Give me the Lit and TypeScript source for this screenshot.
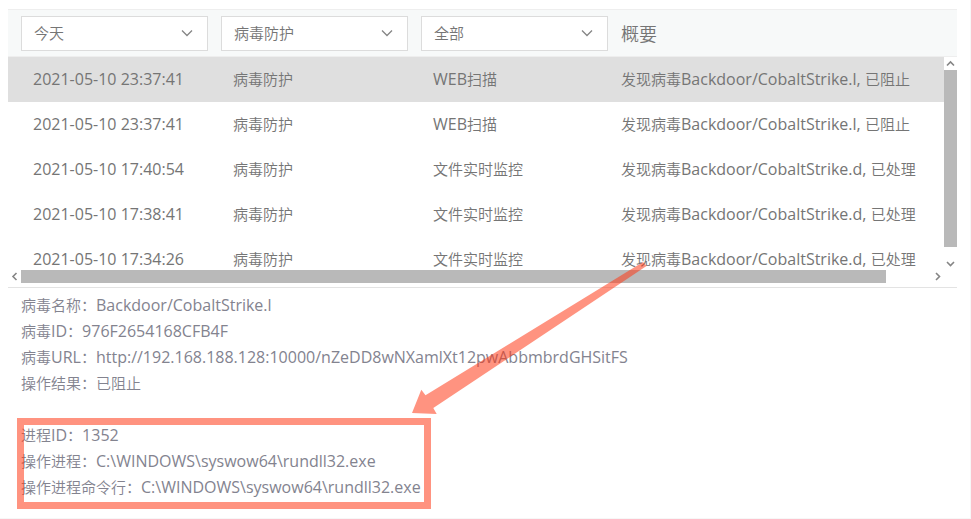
import { LitElement, html, css, svg } from "lit";
import { customElement, state } from "lit/decorators.js";
import { classMap } from "lit/directives/class-map.js";

interface LogEntry {
  time: string;
  category: string;
  feature: string;
  summary: string;
}

const ENTRIES: LogEntry[] = [
  { time: "2021-05-10 23:37:41", category: "病毒防护", feature: "WEB扫描", summary: "发现病毒Backdoor/CobaltStrike.l, 已阻止" },
  { time: "2021-05-10 23:37:41", category: "病毒防护", feature: "WEB扫描", summary: "发现病毒Backdoor/CobaltStrike.l, 已阻止" },
  { time: "2021-05-10 17:40:54", category: "病毒防护", feature: "文件实时监控", summary: "发现病毒Backdoor/CobaltStrike.d, 已处理" },
  { time: "2021-05-10 17:38:41", category: "病毒防护", feature: "文件实时监控", summary: "发现病毒Backdoor/CobaltStrike.d, 已处理" },
  { time: "2021-05-10 17:34:26", category: "病毒防护", feature: "文件实时监控", summary: "发现病毒Backdoor/CobaltStrike.d, 已处理" },
];

const THREAT: [string, string][] = [
  ["病毒名称", "Backdoor/CobaltStrike.l"],
  ["病毒ID", "976F2654168CFB4F"],
  ["病毒URL", "http://192.168.188.128:10000/nZeDD8wNXamlXt12pwAbbmbrdGHSitFS"],
  ["操作结果", "已阻止"],
];

const PROCESS: [string, string][] = [
  ["进程ID", "1352"],
  ["操作进程", "C:\\WINDOWS\\syswow64\\rundll32.exe"],
  ["操作进程命令行", "C:\\WINDOWS\\syswow64\\rundll32.exe"],
];

const FILTERS = [
  { label: "时间", options: ["今天"] },
  { label: "类别", options: ["病毒防护"] },
  { label: "功能", options: ["全部"] },
];

// Latin runs are set one step larger than the Chinese text around them.
const mixed = (text: string) =>
  text
    .split(/([\x20-\x7e]+)/)
    .filter(Boolean)
    .map((run) => (/^[\x20-\x7e]/.test(run) ? html`<span class="latin">${run}</span>` : run));

const CHEVRONS = {
  up: "M3 8.5 6.5 5 10 8.5",
  down: "M3 5 6.5 8.5 10 5",
  left: "M8.5 3 5 6.5 8.5 10",
  right: "M5 3 8.5 6.5 5 10",
};

const arrow = (dir: keyof typeof CHEVRONS) =>
  html`<svg class="arrow" viewBox="0 0 13 13" aria-hidden="true">${svg`<path d=${CHEVRONS[dir]} />`}</svg>`;

@customElement("app-root")
export class AppRoot extends LitElement {
  @state() private selected = 0;

  static styles = css`
    :host {
      display: block;
      box-sizing: border-box;
      min-height: 100vh;
      padding: 9px 13px 8px 8px;
      border-right: 1px solid #f7f7f7;
      border-bottom: 1px solid #f7f7f7;
      background: #fff;
      color: #757575;
      font-family: "Noto Sans CJK SC", sans-serif;
      font-size: 15px;
      font-weight: 350;
      line-height: 26px;
    }
    .latin {
      font-family: "Open Sans", sans-serif;
      font-size: 16px;
      font-weight: 400;
      line-height: 1;
    }
    .filters {
      display: grid;
      grid-template-columns: 187px 187px 187px 1fr;
      gap: 13px;
      align-items: center;
      box-sizing: border-box;
      height: 48px;
      padding-left: 13px;
      border-top: 1px solid #eee;
      border-bottom: 1px solid #eee;
      background: #f7f9f9;
    }
    .filter {
      display: grid;
      align-items: center;
    }
    .filter select, .filter svg {
      grid-area: 1 / 1;
    }
    .filter select {
      appearance: none;
      height: 35px;
      margin: 0;
      padding: 0 32px 0 12px;
      border: 1px solid #dcdcdc;
      border-radius: 0;
      background: #fff;
      color: inherit;
      font: inherit;
    }
    .filter svg {
      justify-self: end;
      width: 12px;
      height: 8px;
      margin-right: 15px;
      pointer-events: none;
    }
    svg path {
      fill: none;
      stroke: #858585;
      stroke-width: 1.3;
    }
    .summary-title {
      margin: 0;
      font-size: 18px;
      font-weight: inherit;
    }
    .list {
      display: grid;
      grid-template-columns: 1fr 13px;
      grid-template-rows: 213px 13px;
      padding-bottom: 4px;
      border-bottom: 1px solid #e3e3e3;
    }
    .viewport {
      overflow: hidden;
    }
    table {
      width: 100%;
      table-layout: fixed;
      border-collapse: collapse;
    }
    .wide {
      width: 200px;
    }
    .feature {
      width: 188px;
    }
    td {
      box-sizing: border-box;
      height: 45px;
      padding: 0 0 2px 25px;
      white-space: nowrap;
    }
    .selected {
      background: #dfdfdf;
    }
    .bar {
      display: flex;
    }
    .bar.vertical {
      flex-direction: column;
    }
    .bar button {
      flex: none;
      display: block;
      width: 13px;
      height: 13px;
      padding: 0;
      border: 0;
      background: none;
    }
    .arrow {
      display: block;
      width: 13px;
      height: 13px;
    }
    .arrow path {
      stroke-width: 1.6;
    }
    .track {
      flex: 1;
    }
    .thumb {
      background: #b9b9b9;
    }
    .vertical .thumb {
      height: 94.6%;
    }
    .horizontal .thumb {
      width: 95%;
      height: 13px;
    }
    .details {
      position: relative;
      display: grid;
      gap: 26px;
      justify-items: start;
      padding: 4px 13px;
      color: #83838f;
    }
    dl {
      margin: 0;
    }
    dl div {
      display: flex;
      height: 26px;
      white-space: nowrap;
    }
    dt, dd {
      margin: 0;
    }
    .process {
      position: relative;
    }
    .process::after {
      content: "";
      position: absolute;
      inset: -4px -10px -9px -4px;
      border: 7px solid rgba(255, 56, 21, 0.54);
    }
    .pointer {
      position: absolute;
      left: 404px;
      top: -27px;
      width: 236px;
      height: 154px;
      pointer-events: none;
    }
    .pointer path {
      fill: rgba(255, 56, 21, 0.54);
      stroke: none;
    }
  `;

  private facts(rows: [string, string][]) {
    return rows.map(([name, value]) => html`<div><dt>${mixed(name)}：</dt><dd>${mixed(value)}</dd></div>`);
  }

  render() {
    return html`
      <div class="filters">
        ${FILTERS.map(
          (f) => html`<label class="filter">
            <select aria-label=${f.label}>${f.options.map((o) => html`<option>${o}</option>`)}</select>
            <svg viewBox="0 0 12 8" aria-hidden="true"><path d="M1 1.5 6 6.5 11 1.5" /></svg>
          </label>`
        )}
        <h2 class="summary-title">概要</h2>
      </div>
      <div class="list">
        <div class="viewport">
          <table>
            <colgroup><col class="wide" /><col class="wide" /><col class="feature" /><col /></colgroup>
            <tbody>
              ${ENTRIES.map(
                (e, i) => html`<tr class=${classMap({ selected: i === this.selected })} @click=${() => (this.selected = i)}>
                  <td>${mixed(e.time)}</td><td>${e.category}</td><td>${mixed(e.feature)}</td><td>${mixed(e.summary)}</td>
                </tr>`
              )}
            </tbody>
          </table>
        </div>
        <div class="bar vertical">
          <button aria-label="向上滚动">${arrow("up")}</button>
          <div class="track"><div class="thumb"></div></div>
          <button aria-label="向下滚动">${arrow("down")}</button>
        </div>
        <div class="bar horizontal">
          <button aria-label="向左滚动">${arrow("left")}</button>
          <div class="track"><div class="thumb"></div></div>
          <button aria-label="向右滚动">${arrow("right")}</button>
        </div>
      </div>
      <div class="details">
        <dl>${this.facts(THREAT)}</dl>
        <dl class="process">${this.facts(PROCESS)}</dl>
        <svg class="pointer" viewBox="0 0 236 154" aria-hidden="true">
          <path d="M0 152 9.3 128.7 13.5 134.3 231 1 234.5 5 21.3 147 24.7 153Z" />
        </svg>
      </div>
    `;
  }
}
